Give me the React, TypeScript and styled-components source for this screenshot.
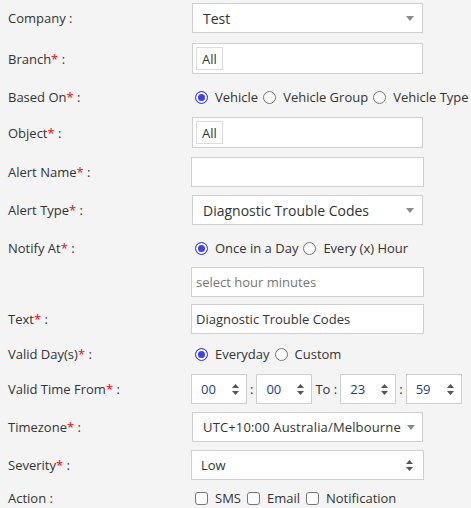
import styled, { createGlobalStyle } from "styled-components";

const GlobalStyle = createGlobalStyle`
  body {
    margin: 0;
    background: #f4f4f4;
    font-family: "Open Sans", "Liberation Sans", sans-serif;
    font-size: 13px;
    color: #333;
  }
`;

function App() {
  return (
    <>
      <GlobalStyle />
      <Form>
        <Row $top={3}>
          <Label>Company :</Label>
          <SelectBox $font={14}>
            <span>Test</span>
            <Caret />
          </SelectBox>
        </Row>

        <Row $top={10}>
          <Label>
            Branch<Star>*</Star> :
          </Label>
          <TagBox>
            <Tag>All</Tag>
          </TagBox>
        </Row>

        <Row $top={13}>
          <Label>
            Based On<Star>*</Star> :
          </Label>
          <Choices>
            <Radio checked>Vehicle</Radio>
            <Radio>Vehicle Group</Radio>
            <Radio>Vehicle Type</Radio>
          </Choices>
        </Row>

        <Row $top={10}>
          <Label>
            Object<Star>*</Star> :
          </Label>
          <TagBox>
            <Tag>All</Tag>
          </TagBox>
        </Row>

        <Row $top={9}>
          <Label>
            Alert Name<Star>*</Star> :
          </Label>
          <TextInput />
        </Row>

        <Row $top={8}>
          <Label>
            Alert Type<Star>*</Star> :
          </Label>
          <SelectBox $font={14}>
            <span>Diagnostic Trouble Codes</span>
            <Caret />
          </SelectBox>
        </Row>

        <Row $top={13}>
          <Label>
            Notify At<Star>*</Star> :
          </Label>
          <Choices>
            <Radio checked>Once in a Day</Radio>
            <Radio>Every (x) Hour</Radio>
          </Choices>
        </Row>

        <Row $top={9}>
          <Label />
          <TextInput placeholder="select hour minutes" />
        </Row>

        <Row $top={7}>
          <Label>
            Text<Star>*</Star> :
          </Label>
          <TextInput defaultValue="Diagnostic Trouble Codes" />
        </Row>

        <Row $top={10}>
          <Label>
            Valid Day(s)<Star>*</Star> :
          </Label>
          <Choices>
            <Radio checked>Everyday</Radio>
            <Radio>Custom</Radio>
          </Choices>
        </Row>

        <Row $top={10}>
          <Label>
            Valid Time From<Star>*</Star> :
          </Label>
          <TimeRow>
            <TimeBox value="00" />
            <Sep>:</Sep>
            <TimeBox value="00" />
            <Sep>To :</Sep>
            <TimeBox value="23" />
            <Sep>:</Sep>
            <TimeBox value="59" />
          </TimeRow>
        </Row>

        <Row $top={8}>
          <Label>
            Timezone<Star>*</Star> :
          </Label>
          <SelectBox $font={13} $spacing={0.15}>
            <span>UTC+10:00 Australia/Melbourne</span>
            <Caret />
          </SelectBox>
        </Row>

        <Row $top={8}>
          <Label>
            Severity<Star>*</Star> :
          </Label>
          <NativeSelect>
            <span>Low</span>
            <Spinner />
          </NativeSelect>
        </Row>

        <Row $top={8}>
          <Label>Action :</Label>
          <Choices $gap={6}>
            <Check>SMS</Check>
            <Check>Email</Check>
            <Check>Notification</Check>
          </Choices>
        </Row>
      </Form>
    </>
  );
}

function Radio({ checked, children }: { checked?: boolean; children: React.ReactNode }) {
  return (
    <Choice>
      <RadioDot $on={!!checked} />
      {children}
    </Choice>
  );
}

function Check({ children }: { children: React.ReactNode }) {
  return (
    <Choice>
      <CheckSquare />
      {children}
    </Choice>
  );
}

function Caret() {
  return (
    <CaretIcon width="8" height="5" viewBox="0 0 8 5">
      <path d="M0 0 H8 L4 5 Z" fill="#8a8a8a" />
    </CaretIcon>
  );
}

function Spinner() {
  return (
    <svg width="7" height="11" viewBox="0 0 7 11">
      <path d="M3.5 0 L7 4 H0 Z M0 7 H7 L3.5 11 Z" fill="#555" />
    </svg>
  );
}

function TimeBox({ value }: { value: string }) {
  return (
    <TimeField>
      <span>{value}</span>
      <Spinner />
    </TimeField>
  );
}

export default App;

const Form = styled.div`
  padding: 0 0 0 8px;
  width: 463px;
  box-sizing: border-box;
`;

const Row = styled.div<{ $top: number }>`
  display: flex;
  align-items: center;
  margin-top: ${(p) => p.$top}px;
`;

const Label = styled.div`
  width: 183px;
  flex-shrink: 0;
  line-height: 20px;
`;

const Star = styled.span`
  color: #ff0000;
`;

const SelectBox = styled.div<{ $font: number; $spacing?: number }>`
  margin-left: 1px;
  width: 231px;
  height: 30px;
  box-sizing: border-box;
  background: #fff;
  border: 1px solid #cfcfcf;
  display: flex;
  align-items: center;
  justify-content: space-between;
  padding: 0 8px 0 10px;
  font-size: ${(p) => p.$font}px;
  letter-spacing: ${(p) => p.$spacing ?? 0}px;
  white-space: nowrap;
`;

const CaretIcon = styled.svg`
  flex-shrink: 0;
  margin-left: 6px;
`;

const NativeSelect = styled.div`
  width: 233px;
  height: 30px;
  box-sizing: border-box;
  background: #fff;
  border: 1px solid #cfcfcf;
  display: flex;
  align-items: center;
  justify-content: space-between;
  padding: 0 10px 0 9px;
`;

const TagBox = styled.div`
  margin-left: 1px;
  width: 231px;
  height: 31px;
  box-sizing: border-box;
  background: #fff;
  border: 1px solid #cfcfcf;
  display: flex;
  align-items: center;
  padding: 0 3px;
`;

const Tag = styled.span`
  display: inline-flex;
  align-items: center;
  height: 23px;
  box-sizing: border-box;
  padding: 0 5px;
  border: 1px solid #dcdcdc;
  background: #fff;
`;

const TextInput = styled.input`
  width: 233px;
  height: 30px;
  box-sizing: border-box;
  margin: 0;
  background: #fff;
  border: 1px solid #cfcfcf;
  padding: 0 4px;
  font-family: inherit;
  font-size: 13px;
  color: #333;
  outline: none;

  &::placeholder {
    color: #777;
  }
`;

const Choices = styled.div<{ $gap?: number }>`
  display: flex;
  align-items: center;
  gap: ${(p) => p.$gap ?? 5}px;
  height: 20px;
  padding-left: 4px;
  white-space: nowrap;
`;

const Choice = styled.label`
  display: inline-flex;
  align-items: center;
  gap: 7px;
`;

const RadioDot = styled.span<{ $on: boolean }>`
  width: 13px;
  height: 13px;
  box-sizing: border-box;
  border-radius: 50%;
  background: ${(p) => (p.$on ? "#3f3ff5" : "#fff")};
  border: 1px solid ${(p) => (p.$on ? "#3f3ff5" : "#767676")};
  box-shadow: ${(p) => (p.$on ? "inset 0 0 0 2px #fff" : "none")};
`;

const CheckSquare = styled.span`
  width: 13px;
  height: 13px;
  box-sizing: border-box;
  border: 1px solid #767676;
  border-radius: 3px;
  background: #fff;
`;

const TimeRow = styled.div`
  display: flex;
  align-items: center;
  gap: 3px;
`;

const TimeField = styled.div`
  width: 56px;
  height: 30px;
  box-sizing: border-box;
  background: #fff;
  border: 1px solid #cfcfcf;
  display: flex;
  align-items: center;
  justify-content: space-between;
  padding: 0 7px 0 9px;
  color: #1b3a8c;
`;

const Sep = styled.span`
  line-height: 20px;
`;
